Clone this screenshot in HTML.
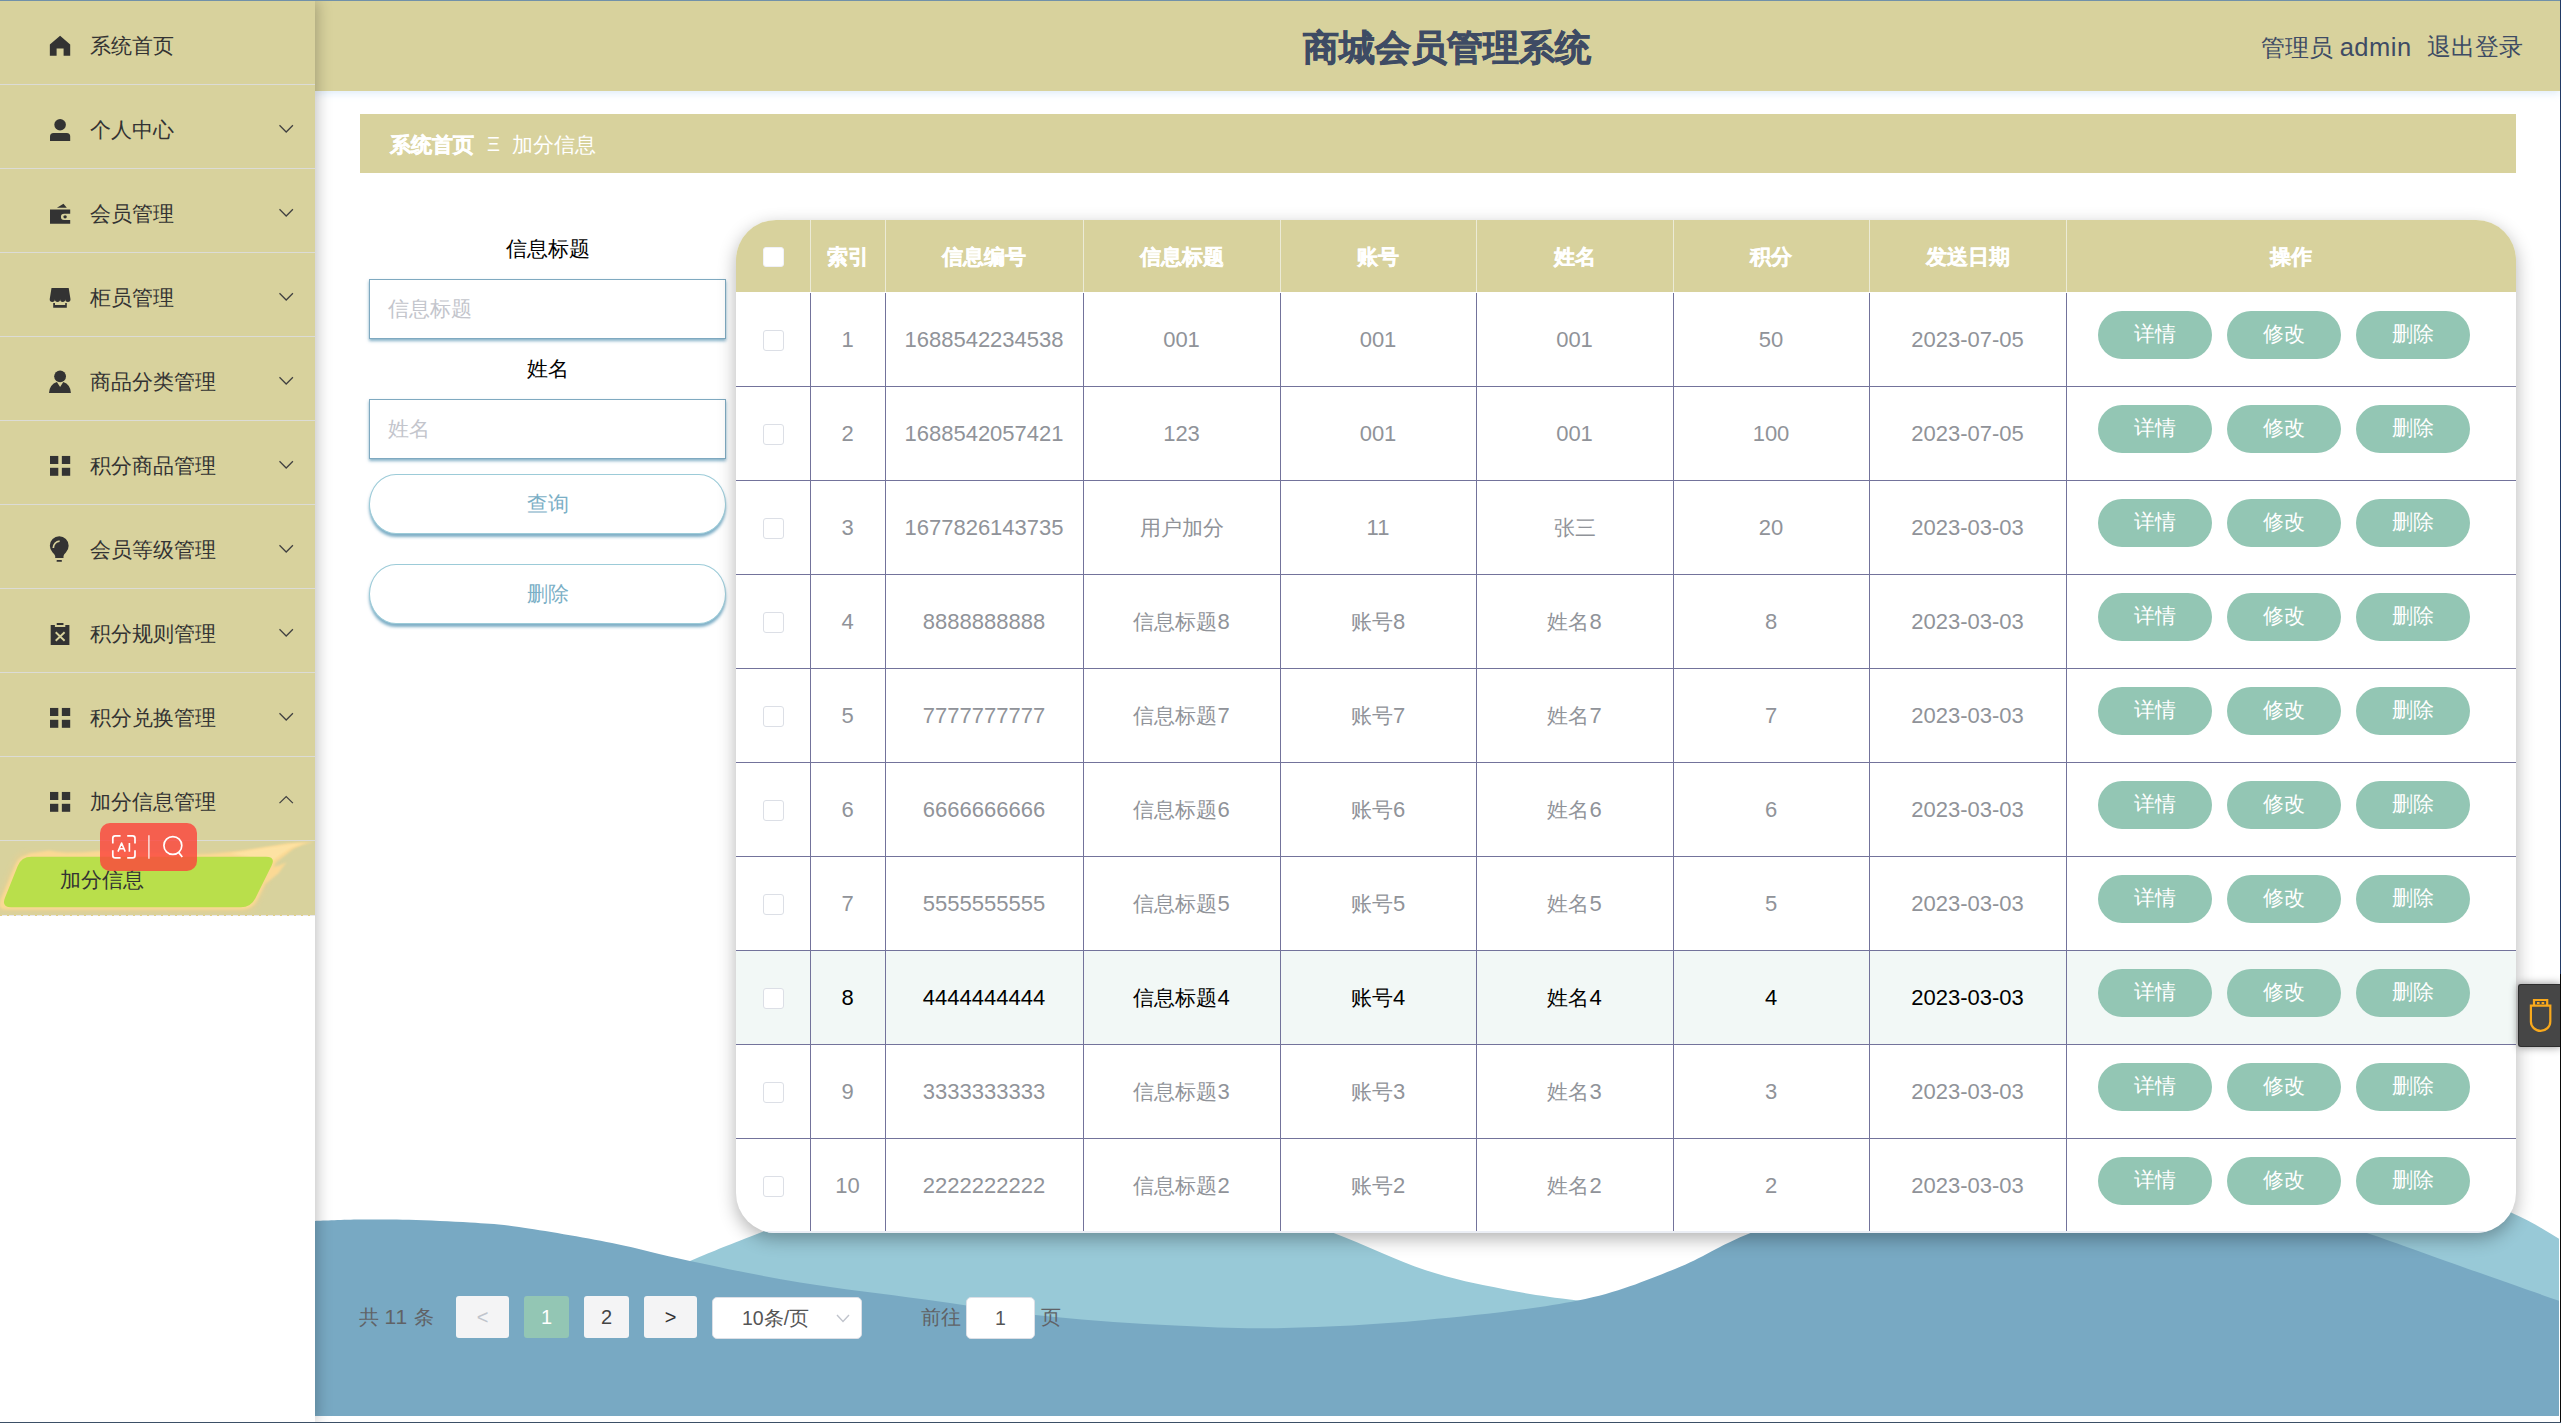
<!DOCTYPE html><html lang="zh"><head><meta charset="utf-8"><title>商城会员管理系统</title><style>
*{box-sizing:border-box;margin:0;padding:0}
html,body{width:2561px;height:1423px;overflow:hidden;background:#fff}
body{position:relative;font-family:"Liberation Sans",sans-serif;font-size:21px;color:#333333}
.abs{position:absolute}
/* frame lines */
#ftop{left:0;top:0;width:2561px;height:1px;background:#7191a9;z-index:50}
#fright{left:2560px;top:0;width:1px;height:1423px;background:linear-gradient(#223a66 0 974px,#0a0a0a 974px);z-index:50}
#fbot{left:0;top:1422px;width:2561px;height:1px;background:#3b4f66;z-index:50}
/* sidebar */
#side{left:0;top:1px;width:315px;height:915px;background:#d8d29d;z-index:20}
#sideshadow{left:0;top:1px;width:315px;height:1421px;box-shadow:2px 0 14px rgba(0,0,0,.25);z-index:19;background:#fff}
.mi{position:absolute;left:0;width:315px;height:84px;border-bottom:1px solid #dcdcd6}
.mi .t{position:absolute;left:90px;top:3px;line-height:84px;font-size:21px;color:#333;white-space:nowrap}
.mi svg.ic{position:absolute;left:40px;top:24px;width:40px;height:40px}
.mi svg.ar{position:absolute;left:278px;top:38px;width:16px;height:11px}
/* header */
#head{left:315px;top:1px;width:2245px;height:90px;background:#d8d29d;z-index:10;box-shadow:0 2px 8px rgba(150,190,235,.33)}
#title{left:1303px;top:23px;font-size:36px;font-weight:bold;-webkit-text-stroke:.7px #3e4b64;color:#3e4b64;line-height:50px;white-space:nowrap;z-index:11}
.user{top:29px;font-size:24px;color:#3e4b64;line-height:36px;white-space:nowrap;z-index:11}
/* breadcrumb */
#bc{left:360px;top:114px;width:2156px;height:59px;background:#d8d29d}
#bc span{position:absolute;top:1px;line-height:60px;color:#fff;font-size:21px;white-space:nowrap}
/* form */
.lbl{width:357px;left:369px;text-align:center;font-size:21px;color:#000;line-height:30px}
.inp{left:369px;width:357px;height:60px;border:1px solid #7fa9c0;background:#fff;box-shadow:0 2px 3px rgba(90,150,180,.75);line-height:58px;padding-left:18px;color:#c3c5cc;font-size:21px}
.pill{left:369px;width:357px;height:60px;border:1px solid #9ccbd8;border-radius:27px/30px;background:#fff;box-shadow:0 3px 3px rgba(95,155,185,.8);line-height:58px;text-align:center;color:#7bafc6;font-size:21px}
/* table card */
#card{left:736px;top:220px;width:1780px;height:1013px;border-radius:40px;background:#fff;box-shadow:0 6px 18px rgba(0,0,0,.3);overflow:hidden;z-index:5}
#thead{left:0;top:0;width:1780px;height:72px;background:#d8d29d}
.th{position:absolute;top:0;height:72px;line-height:74px;text-align:center;color:#fff;font-weight:bold;-webkit-text-stroke:.35px #fff;font-size:21px;border-right:1px solid #ecebd6}
.row{position:absolute;left:0;width:1780px;height:94px;border-bottom:1px solid #73739b}
.row.hov{background:#f2f8f6}
.td{position:absolute;top:0;height:94px;line-height:93px;text-align:center;color:#909399;font-size:21px;border-right:1px solid #73739b;white-space:nowrap}
.row.hov .td{color:#000}
.n{font-size:22px}
.cb{position:absolute;left:27px;top:37px;width:21px;height:21px;border:1px solid #dcdfe6;border-radius:3px;background:#fff}
.ab{position:absolute;top:18px;width:114px;height:48px;border-radius:24px;background:#93c6b4;color:#fff;font-size:21px;line-height:46px;text-align:center}
/* pagination */
.pg{top:1296px;height:42px;line-height:42px;font-size:20px;text-align:center;border-radius:3px;z-index:6}
</style></head><body>
<div id="ftop" class="abs"></div><div id="fright" class="abs"></div><div id="fbot" class="abs"></div>
<svg class="abs" style="left:315px;top:1140px;z-index:1" width="2244" height="276" viewBox="315 1140 2244 276"><path fill="#98c9d7" d="M600.0,1300.0 C615.0,1293.5 663.0,1272.3 690.0,1261.0 C717.0,1249.7 727.0,1245.5 762.0,1232.0 C797.0,1218.5 852.0,1192.0 900.0,1180.0 C948.0,1168.0 1000.0,1159.2 1050.0,1160.0 C1100.0,1160.8 1153.2,1173.0 1200.0,1185.0 C1246.8,1197.0 1293.5,1217.8 1331.0,1232.0 C1368.5,1246.2 1396.3,1260.5 1425.0,1270.0 C1453.7,1279.5 1477.5,1283.9 1503.0,1289.0 C1528.5,1294.1 1545.2,1296.4 1578.0,1300.6 C1610.8,1304.8 1663.0,1310.8 1700.0,1314.0 C1737.0,1317.2 1783.3,1319.0 1800.0,1320.0 L1800,1416 L600,1416 Z"/><path fill="#98c9d7" d="M2250.0,1260.0 C2263.3,1250.0 2301.7,1213.3 2330.0,1200.0 C2358.3,1186.7 2389.8,1177.9 2420.0,1180.0 C2450.2,1182.1 2487.5,1202.5 2511.0,1212.5 C2534.5,1222.5 2552.7,1235.4 2561.0,1240.0 L2561,1416 L2250,1416 Z"/><path fill="#78a9c3" d="M315.0,1221.0 C322.5,1220.8 344.3,1219.8 360.0,1219.6 C375.7,1219.4 390.7,1219.2 409.0,1219.7 C427.3,1220.2 451.7,1221.3 470.0,1222.5 C488.3,1223.7 495.3,1223.6 519.0,1227.0 C542.7,1230.4 583.5,1237.3 612.0,1243.0 C640.5,1248.7 658.7,1254.4 690.0,1261.0 C721.3,1267.6 760.8,1276.1 800.0,1282.5 C839.2,1288.9 883.3,1293.8 925.0,1299.5 C966.7,1305.2 1008.3,1312.2 1050.0,1316.5 C1091.7,1320.8 1136.0,1323.7 1175.0,1325.6 C1214.0,1327.5 1242.3,1328.9 1284.0,1328.0 C1325.7,1327.1 1376.0,1324.6 1425.0,1320.0 C1474.0,1315.4 1536.3,1309.1 1578.0,1300.6 C1619.7,1292.1 1645.8,1280.4 1675.0,1269.0 C1704.2,1257.6 1715.5,1246.8 1753.0,1232.0 C1790.5,1217.2 1848.8,1192.0 1900.0,1180.0 C1951.2,1168.0 2006.7,1159.2 2060.0,1160.0 C2113.3,1160.8 2169.3,1173.0 2220.0,1185.0 C2270.7,1197.0 2324.0,1218.5 2364.0,1232.0 C2404.0,1245.5 2427.2,1254.4 2460.0,1266.0 C2492.8,1277.6 2544.2,1295.6 2561.0,1301.5 L2561,1416 L315,1416 Z"/></svg>
<div id="sideshadow" class="abs"></div>
<div id="side" class="abs">
<div class="mi" style="top:0px"><svg class="ic" viewBox="0 0 40 40" fill="#333"><path d="M20.1,10.8 L30.2,19.4 V30.8 H23.6 V23.6 H16.6 V30.8 H9.85 V19.4 Z"/></svg><span class="t">系统首页</span></div>
<div class="mi" style="top:84px"><svg class="ic" viewBox="0 0 40 40" fill="#333"><circle cx="20.1" cy="15.75" r="5.8"/><path d="M10,31.9 V27.4 Q10,23.9 13.5,23.9 H26.7 Q30.2,23.9 30.2,27.4 V31.9 Z"/></svg><span class="t">个人中心</span><svg class="ar" viewBox="0 0 16 11"><path d="M1.5 2.2 L8.2 9 L14.9 2.2" fill="none" stroke="#404040" stroke-width="1.25"/></svg></div>
<div class="mi" style="top:168px"><svg class="ic" viewBox="0 0 40 40" fill="#333"><path d="M16.9,14.8 L23.5,10.8 L26.8,14.8 Z"/><path d="M10,16.6 H30.2 V20.65 H24.1 A3.17,3.17 0 0 0 24.1,27 H30.2 V30.8 H10 Z"/><circle cx="25.1" cy="23.85" r="1.7"/></svg><span class="t">会员管理</span><svg class="ar" viewBox="0 0 16 11"><path d="M1.5 2.2 L8.2 9 L14.9 2.2" fill="none" stroke="#404040" stroke-width="1.25"/></svg></div>
<div class="mi" style="top:252px"><svg class="ic" viewBox="0 0 40 40" fill="#333"><path d="M11.5,10.95 H28.7 L30.5,22.3 A2.6,2.6 0 0 1 25.3,22.3 A2.6,2.6 0 0 1 20.1,22.3 A2.6,2.6 0 0 1 14.9,22.3 A2.6,2.6 0 0 1 9.7,22.3 Z"/><path d="M13.2,26.1 H15 V28.1 H25.2 V26.1 H26.8 V30.8 H13.2 Z"/></svg><span class="t">柜员管理</span><svg class="ar" viewBox="0 0 16 11"><path d="M1.5 2.2 L8.2 9 L14.9 2.2" fill="none" stroke="#404040" stroke-width="1.25"/></svg></div>
<div class="mi" style="top:336px"><svg class="ic" viewBox="0 0 40 40" fill="#333"><circle cx="20.1" cy="15.3" r="5.9"/><path d="M9,31.9 Q9.6,23.6 16.9,21.1 L20.1,26.1 L23.3,21.1 Q30.4,23.6 30.9,31.9 Z"/></svg><span class="t">商品分类管理</span><svg class="ar" viewBox="0 0 16 11"><path d="M1.5 2.2 L8.2 9 L14.9 2.2" fill="none" stroke="#404040" stroke-width="1.25"/></svg></div>
<div class="mi" style="top:420px"><svg class="ic" viewBox="0 0 40 40" fill="#333"><rect x="10" y="10.95" width="8.3" height="8.05"/><rect x="21.85" y="10.95" width="8.35" height="8.05"/><rect x="10" y="22.8" width="8.3" height="8"/><rect x="21.85" y="22.8" width="8.35" height="8"/></svg><span class="t">积分商品管理</span><svg class="ar" viewBox="0 0 16 11"><path d="M1.5 2.2 L8.2 9 L14.9 2.2" fill="none" stroke="#404040" stroke-width="1.25"/></svg></div>
<div class="mi" style="top:504px"><svg class="ic" viewBox="0 0 40 40" fill="#333"><path d="M15.2,28.95 V27 Q14.6,25.3 12.6,23.4 A9.4,9.4 0 1 1 25.9,23.4 Q23.9,25.3 23.5,27 V28.95 Z"/><rect x="16.6" y="31.05" width="5.3" height="1.7" rx=".5"/><path d="M13.3,19.1 A6.5,6.9 0 0 1 19.6,12.2" fill="none" stroke="#d8d29d" stroke-width="1.7"/></svg><span class="t">会员等级管理</span><svg class="ar" viewBox="0 0 16 11"><path d="M1.5 2.2 L8.2 9 L14.9 2.2" fill="none" stroke="#404040" stroke-width="1.25"/></svg></div>
<div class="mi" style="top:588px"><svg class="ic" viewBox="0 0 40 40" fill="#333"><path d="M10.7,12.1 H14.9 V14.05 H25.3 V12.1 H29.4 V31.9 H10.7 Z"/><rect x="16.7" y="10" width="6.8" height="2.1" rx=".5"/><path d="M15.7,19.2 L24.6,27.7 M24.6,19.2 L15.7,27.7" stroke="#d8d29d" stroke-width="1.9" fill="none"/></svg><span class="t">积分规则管理</span><svg class="ar" viewBox="0 0 16 11"><path d="M1.5 2.2 L8.2 9 L14.9 2.2" fill="none" stroke="#404040" stroke-width="1.25"/></svg></div>
<div class="mi" style="top:672px"><svg class="ic" viewBox="0 0 40 40" fill="#333"><rect x="10" y="10.95" width="8.3" height="8.05"/><rect x="21.85" y="10.95" width="8.35" height="8.05"/><rect x="10" y="22.8" width="8.3" height="8"/><rect x="21.85" y="22.8" width="8.35" height="8"/></svg><span class="t">积分兑换管理</span><svg class="ar" viewBox="0 0 16 11"><path d="M1.5 2.2 L8.2 9 L14.9 2.2" fill="none" stroke="#404040" stroke-width="1.25"/></svg></div>
<div class="mi" style="top:756px"><svg class="ic" viewBox="0 0 40 40" fill="#333"><rect x="10" y="10.95" width="8.3" height="8.05"/><rect x="21.85" y="10.95" width="8.35" height="8.05"/><rect x="10" y="22.8" width="8.3" height="8"/><rect x="21.85" y="22.8" width="8.35" height="8"/></svg><span class="t">加分信息管理</span><svg class="ar" viewBox="0 0 16 11"><path d="M1.5 8.1 L8.2 1.6 L14.9 8.1" fill="none" stroke="#404040" stroke-width="1.25"/></svg></div>
<svg class="abs" style="left:0;top:840px" width="315" height="75" viewBox="0 841 315 75"><defs><filter id="fb" x="-10%" y="-30%" width="120%" height="160%"><feGaussianBlur stdDeviation="0.9"/></filter><filter id="fb2" x="-10%" y="-30%" width="120%" height="160%"><feGaussianBlur stdDeviation="2.2"/></filter></defs><path filter="url(#fb2)" fill="#f3cf8c" opacity=".3" d="M13.3,860.3 Q17.0,851.0 27.0,851.0 L273.0,851.0 Q283.0,851.0 278.8,860.1 L258.2,903.9 Q254.0,913.0 244.0,913.0 L2.0,913.0 Q-8.0,913.0 -4.3,903.7 Z"/><g filter="url(#fb)" fill="#fbd994"><path d="M15.3,864.5 Q19.6,854.4 30.6,854.4 L268.8,854.4 Q279.8,854.4 275.0,864.3 L257.6,899.8 Q252.8,909.7 241.8,909.7 L7.4,909.7 Q-3.6,909.7 0.7,899.6 Z" opacity=".95"/><path d="M23,858 L29,853.6 L40,852 L49,850.6 L56,851.8 L66,852.8 L82,852.6 L100,851 L197,854.6 L197,858 Z"/><path d="M197,858 L197,855.2 L240,851 L270,846.2 L288,843.3 L313.5,841.8 L302,845 L293.5,848.8 L285,855.4 L276,862 L272,865.5 L268,858 Z"/><path d="M269.5,868 L279,865.6 L286.5,862.4 L282.5,867.5 L278.6,873.3 L272,878.5 L265.5,884 Z"/></g><path d="M230,853.5 L268,847.5 L290,844.2 L306,842.6 L292,847.2 L281,854.5 L272,861 Z" fill="#fee6a8" opacity=".75" filter="url(#fb)"/><path d="M17.7,866.1 Q21.4,856.8 31.4,856.8 L266.0,856.8 Q276.0,856.8 271.5,865.8 L255.4,898.2 Q250.9,907.2 240.9,907.2 L11.2,907.2 Q1.2,907.2 4.9,897.9 Z" fill="#b9df4b"/></svg><div class="abs" style="left:60px;top:864px;line-height:30px;font-size:21px;color:#333;white-space:nowrap">加分信息</div><div class="abs" style="left:0;top:914px;width:315px;height:1px;background:repeating-linear-gradient(90deg,#e3cf86 0 2px,#e9e9ee 2px 7px)"></div>
</div>
<div id="head" class="abs"></div>
<div id="title" class="abs">商城会员管理系统</div>
<div class="abs user" style="left:2261px">管理员 <span style="font-size:25.5px;letter-spacing:.5px">admin</span></div><div class="abs user" style="left:2427px">退出登录</div>
<div id="bc" class="abs"><span style="left:30px;font-weight:bold;-webkit-text-stroke:.5px #fff">系统首页</span><span style="left:127px;font-size:20px;top:0">Ξ</span><span style="left:152px">加分信息</span></div>
<div class="abs lbl" style="top:234px">信息标题</div>
<div class="abs inp" style="top:279px">信息标题</div>
<div class="abs lbl" style="top:354px">姓名</div>
<div class="abs inp" style="top:399px">姓名</div>
<div class="abs pill" style="top:474px">查询</div>
<div class="abs pill" style="top:564px">删除</div>
<div id="card" class="abs"><div id="thead" class="abs">
<div class="th" style="left:0px;width:75px"><i class="cb" style="top:26.5px;left:27px;border-color:#f0f1f8;width:20.6px;height:20.6px"></i></div>
<div class="th" style="left:74px;width:76px">索引</div>
<div class="th" style="left:149px;width:199px">信息编号</div>
<div class="th" style="left:347px;width:198px">信息标题</div>
<div class="th" style="left:544px;width:197px">账号</div>
<div class="th" style="left:740px;width:198px">姓名</div>
<div class="th" style="left:937px;width:197px">积分</div>
<div class="th" style="left:1133px;width:198px">发送日期</div>
<div class="th" style="left:1330px;width:450px;border-right:none">操作</div>
</div>
<div class="row" style="top:73px">
<div class="td" style="left:0;width:75px"><i class="cb"></i></div>
<div class="td" style="left:74px;width:76px"><span class="n">1</span></div>
<div class="td" style="left:149px;width:199px"><span class="n">1688542234538</span></div>
<div class="td" style="left:347px;width:198px"><span class="n">001</span></div>
<div class="td" style="left:544px;width:197px"><span class="n">001</span></div>
<div class="td" style="left:740px;width:198px"><span class="n">001</span></div>
<div class="td" style="left:937px;width:197px"><span class="n">50</span></div>
<div class="td" style="left:1133px;width:198px"><span class="n">2023-07-05</span></div>
<div class="td" style="left:1330px;width:450px;border-right:none">
<span class="ab" style="left:32px">详情</span>
<span class="ab" style="left:161px">修改</span>
<span class="ab" style="left:290px">删除</span>
</div></div>
<div class="row" style="top:167px">
<div class="td" style="left:0;width:75px"><i class="cb"></i></div>
<div class="td" style="left:74px;width:76px"><span class="n">2</span></div>
<div class="td" style="left:149px;width:199px"><span class="n">1688542057421</span></div>
<div class="td" style="left:347px;width:198px"><span class="n">123</span></div>
<div class="td" style="left:544px;width:197px"><span class="n">001</span></div>
<div class="td" style="left:740px;width:198px"><span class="n">001</span></div>
<div class="td" style="left:937px;width:197px"><span class="n">100</span></div>
<div class="td" style="left:1133px;width:198px"><span class="n">2023-07-05</span></div>
<div class="td" style="left:1330px;width:450px;border-right:none">
<span class="ab" style="left:32px">详情</span>
<span class="ab" style="left:161px">修改</span>
<span class="ab" style="left:290px">删除</span>
</div></div>
<div class="row" style="top:261px">
<div class="td" style="left:0;width:75px"><i class="cb"></i></div>
<div class="td" style="left:74px;width:76px"><span class="n">3</span></div>
<div class="td" style="left:149px;width:199px"><span class="n">1677826143735</span></div>
<div class="td" style="left:347px;width:198px">用户加分</div>
<div class="td" style="left:544px;width:197px"><span class="n">11</span></div>
<div class="td" style="left:740px;width:198px">张三</div>
<div class="td" style="left:937px;width:197px"><span class="n">20</span></div>
<div class="td" style="left:1133px;width:198px"><span class="n">2023-03-03</span></div>
<div class="td" style="left:1330px;width:450px;border-right:none">
<span class="ab" style="left:32px">详情</span>
<span class="ab" style="left:161px">修改</span>
<span class="ab" style="left:290px">删除</span>
</div></div>
<div class="row" style="top:355px">
<div class="td" style="left:0;width:75px"><i class="cb"></i></div>
<div class="td" style="left:74px;width:76px"><span class="n">4</span></div>
<div class="td" style="left:149px;width:199px"><span class="n">8888888888</span></div>
<div class="td" style="left:347px;width:198px">信息标题<span class="n">8</span></div>
<div class="td" style="left:544px;width:197px">账号<span class="n">8</span></div>
<div class="td" style="left:740px;width:198px">姓名<span class="n">8</span></div>
<div class="td" style="left:937px;width:197px"><span class="n">8</span></div>
<div class="td" style="left:1133px;width:198px"><span class="n">2023-03-03</span></div>
<div class="td" style="left:1330px;width:450px;border-right:none">
<span class="ab" style="left:32px">详情</span>
<span class="ab" style="left:161px">修改</span>
<span class="ab" style="left:290px">删除</span>
</div></div>
<div class="row" style="top:449px">
<div class="td" style="left:0;width:75px"><i class="cb"></i></div>
<div class="td" style="left:74px;width:76px"><span class="n">5</span></div>
<div class="td" style="left:149px;width:199px"><span class="n">7777777777</span></div>
<div class="td" style="left:347px;width:198px">信息标题<span class="n">7</span></div>
<div class="td" style="left:544px;width:197px">账号<span class="n">7</span></div>
<div class="td" style="left:740px;width:198px">姓名<span class="n">7</span></div>
<div class="td" style="left:937px;width:197px"><span class="n">7</span></div>
<div class="td" style="left:1133px;width:198px"><span class="n">2023-03-03</span></div>
<div class="td" style="left:1330px;width:450px;border-right:none">
<span class="ab" style="left:32px">详情</span>
<span class="ab" style="left:161px">修改</span>
<span class="ab" style="left:290px">删除</span>
</div></div>
<div class="row" style="top:543px">
<div class="td" style="left:0;width:75px"><i class="cb"></i></div>
<div class="td" style="left:74px;width:76px"><span class="n">6</span></div>
<div class="td" style="left:149px;width:199px"><span class="n">6666666666</span></div>
<div class="td" style="left:347px;width:198px">信息标题<span class="n">6</span></div>
<div class="td" style="left:544px;width:197px">账号<span class="n">6</span></div>
<div class="td" style="left:740px;width:198px">姓名<span class="n">6</span></div>
<div class="td" style="left:937px;width:197px"><span class="n">6</span></div>
<div class="td" style="left:1133px;width:198px"><span class="n">2023-03-03</span></div>
<div class="td" style="left:1330px;width:450px;border-right:none">
<span class="ab" style="left:32px">详情</span>
<span class="ab" style="left:161px">修改</span>
<span class="ab" style="left:290px">删除</span>
</div></div>
<div class="row" style="top:637px">
<div class="td" style="left:0;width:75px"><i class="cb"></i></div>
<div class="td" style="left:74px;width:76px"><span class="n">7</span></div>
<div class="td" style="left:149px;width:199px"><span class="n">5555555555</span></div>
<div class="td" style="left:347px;width:198px">信息标题<span class="n">5</span></div>
<div class="td" style="left:544px;width:197px">账号<span class="n">5</span></div>
<div class="td" style="left:740px;width:198px">姓名<span class="n">5</span></div>
<div class="td" style="left:937px;width:197px"><span class="n">5</span></div>
<div class="td" style="left:1133px;width:198px"><span class="n">2023-03-03</span></div>
<div class="td" style="left:1330px;width:450px;border-right:none">
<span class="ab" style="left:32px">详情</span>
<span class="ab" style="left:161px">修改</span>
<span class="ab" style="left:290px">删除</span>
</div></div>
<div class="row hov" style="top:731px">
<div class="td" style="left:0;width:75px"><i class="cb"></i></div>
<div class="td" style="left:74px;width:76px"><span class="n">8</span></div>
<div class="td" style="left:149px;width:199px"><span class="n">4444444444</span></div>
<div class="td" style="left:347px;width:198px">信息标题<span class="n">4</span></div>
<div class="td" style="left:544px;width:197px">账号<span class="n">4</span></div>
<div class="td" style="left:740px;width:198px">姓名<span class="n">4</span></div>
<div class="td" style="left:937px;width:197px"><span class="n">4</span></div>
<div class="td" style="left:1133px;width:198px"><span class="n">2023-03-03</span></div>
<div class="td" style="left:1330px;width:450px;border-right:none">
<span class="ab" style="left:32px">详情</span>
<span class="ab" style="left:161px">修改</span>
<span class="ab" style="left:290px">删除</span>
</div></div>
<div class="row" style="top:825px">
<div class="td" style="left:0;width:75px"><i class="cb"></i></div>
<div class="td" style="left:74px;width:76px"><span class="n">9</span></div>
<div class="td" style="left:149px;width:199px"><span class="n">3333333333</span></div>
<div class="td" style="left:347px;width:198px">信息标题<span class="n">3</span></div>
<div class="td" style="left:544px;width:197px">账号<span class="n">3</span></div>
<div class="td" style="left:740px;width:198px">姓名<span class="n">3</span></div>
<div class="td" style="left:937px;width:197px"><span class="n">3</span></div>
<div class="td" style="left:1133px;width:198px"><span class="n">2023-03-03</span></div>
<div class="td" style="left:1330px;width:450px;border-right:none">
<span class="ab" style="left:32px">详情</span>
<span class="ab" style="left:161px">修改</span>
<span class="ab" style="left:290px">删除</span>
</div></div>
<div class="row" style="top:919px;border-bottom:none">
<div class="td" style="left:0;width:75px"><i class="cb"></i></div>
<div class="td" style="left:74px;width:76px"><span class="n">10</span></div>
<div class="td" style="left:149px;width:199px"><span class="n">2222222222</span></div>
<div class="td" style="left:347px;width:198px">信息标题<span class="n">2</span></div>
<div class="td" style="left:544px;width:197px">账号<span class="n">2</span></div>
<div class="td" style="left:740px;width:198px">姓名<span class="n">2</span></div>
<div class="td" style="left:937px;width:197px"><span class="n">2</span></div>
<div class="td" style="left:1133px;width:198px"><span class="n">2023-03-03</span></div>
<div class="td" style="left:1330px;width:450px;border-right:none">
<span class="ab" style="left:32px">详情</span>
<span class="ab" style="left:161px">修改</span>
<span class="ab" style="left:290px">删除</span>
</div></div>
<div class="abs" style="left:0;top:1011px;width:1780px;height:2px;background:#ebeef5"></div>
</div>
<div class="abs pg" style="left:359px;color:#606266;font-size:19.5px;white-space:nowrap">共 <span style="font-size:21px;letter-spacing:1px">11</span> 条</div><div class="abs pg" style="left:456px;width:53px;background:#f4f4f5;color:#c0c4cc">&lt;</div><div class="abs pg" style="left:524px;width:45px;background:#93c6b4;color:#fff">1</div><div class="abs pg" style="left:584px;width:45px;background:#f4f4f5;color:#444">2</div><div class="abs pg" style="left:644px;width:53px;background:#f4f4f5;color:#333">&gt;</div><div class="abs pg" style="left:712px;top:1297px;width:150px;background:#fff;color:#555;border-radius:5px;border:1px solid #dcdfe6;line-height:40px;text-align:left;padding-left:29px;font-size:19.5px;white-space:nowrap">10条/页<svg style="position:absolute;left:123px;top:16px" width="14" height="9" viewBox="0 0 14 9"><path d="M1 1 L7 7.5 L13 1" fill="none" stroke="#c0c4cc" stroke-width="1.4"/></svg></div><div class="abs pg" style="left:921px;color:#606266;font-size:19.5px;white-space:nowrap">前往</div><div class="abs pg" style="left:966px;top:1297px;width:69px;background:#fff;color:#555;border-radius:5px;border:1px solid #dcdfe6;line-height:40px;font-size:19.5px">1</div><div class="abs pg" style="left:1041px;color:#606266;font-size:19.5px">页</div>
<div class="abs" style="left:100px;top:823px;width:97px;height:48px;border-radius:10px;background:rgba(251,70,61,.82);z-index:40"><svg width="97" height="48" viewBox="100 823 97 48" fill="none" stroke="#fff" stroke-width="1.7" stroke-linecap="butt" stroke-linejoin="round"><path d="M112.8,843.6 V838.2 Q112.8,835.85 115.2,835.85 H120.6"/><path d="M127.2,835.85 H132.6 Q135,835.85 135,838.2 V843.6"/><path d="M135,850.2 V855.6 Q135,857.95 132.6,857.95 H127.2"/><path d="M120.6,857.95 H115.2 Q112.8,857.95 112.8,855.6 V850.2"/><path d="M118,851.6 L121.6,843 L125.2,851.6 M119.3,848.7 H123.9 M129.4,842.9 V851.7" stroke-width="1.6"/><path d="M148.9,835.2 V858.8" stroke-width="1.5" opacity=".8"/><circle cx="172.85" cy="845.5" r="8.95"/><path d="M178.6,852.4 L182.3,857"/></svg></div><div class="abs" style="left:2518px;top:984px;width:43px;height:63px;background:#464646;border-radius:3px 0 0 3px;border:1px solid #2e2e2e;border-right:none;box-shadow:0 0 8px rgba(0,0,0,.45);z-index:40"><svg style="position:absolute;left:-1px;top:-1px" width="43" height="63" viewBox="2518 984 43 63" fill="none" stroke="#f9a91c" stroke-width="2.2"><path d="M2534,1005.5 V1000 H2547.2 V1005.5"/><path d="M2530.9,1005.6 H2550.3 V1021.4 A9.7,9.5 0 0 1 2530.9,1021.4 Z"/><path d="M2537,1003 H2539.6 M2541.6,1003 H2544.2" stroke-width="1.8"/></svg></div>
</body></html>
